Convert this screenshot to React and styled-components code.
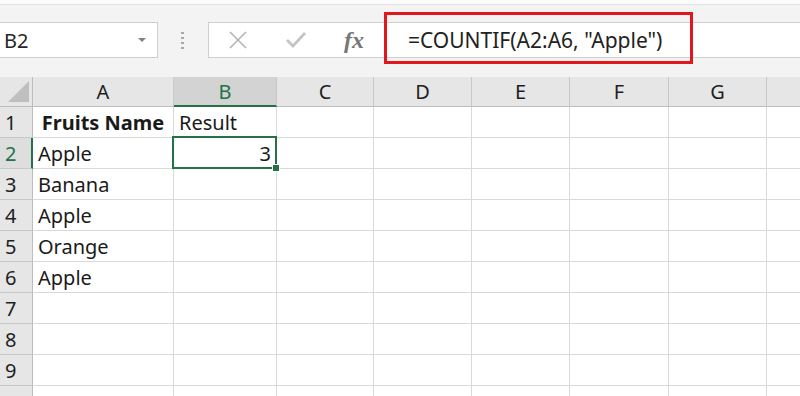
import React from 'react'
import styled, { createGlobalStyle } from 'styled-components'

const GlobalStyle = createGlobalStyle`
  body {
    margin: 0;
    background: #ffffff;
  }
`

// last column lies past the window edge, its letter is never seen
const columns = ['A', 'B', 'C', 'D', 'E', 'F', 'G', '']

const rows = [
  { a: 'Fruits Name', b: 'Result', head: true },
  { a: 'Apple', b: '3' },
  { a: 'Banana' },
  { a: 'Apple' },
  { a: 'Orange' },
  { a: 'Apple' },
  {},
  {},
  {},
  {},
]

function App() {
  return (
    <Page>
      <GlobalStyle />
      <TopStrip />
      <FormulaRow>
        <NameBox>
          <span>B2</span>
          <Caret />
        </NameBox>
        <Grip>
          <i /><i /><i /><i />
        </Grip>
        <FormulaBox>
          <IconSlot>
            <svg width="20" height="20" viewBox="0 0 20 20">
              <path d="M2 2 L18 18 M18 2 L2 18" stroke="#b4b4b4" strokeWidth="1.6" fill="none" />
            </svg>
          </IconSlot>
          <IconSlot>
            <svg width="22" height="18" viewBox="0 0 22 18">
              <path d="M2 9 L8 15 L20 2" stroke="#c4c4c4" strokeWidth="2.8" fill="none" />
            </svg>
          </IconSlot>
          <IconSlot>
            <Fx>fx</Fx>
          </IconSlot>
          <FormulaText>=COUNTIF(A2:A6, "Apple")</FormulaText>
        </FormulaBox>
        <Highlight />
      </FormulaRow>
      <Sheet>
        <Corner>
          <Triangle />
        </Corner>
        {columns.map((c, i) => (
          <ColHead key={i} $active={c === 'B'}>{c}</ColHead>
        ))}
        {rows.map((r, i) => (
          <React.Fragment key={i}>
            <RowHead $active={i === 1}>{i < 9 ? i + 1 : ''}</RowHead>
            <Cell $bold={r.head} $align={r.head ? 'center' : 'flex-start'}>{r.a}</Cell>
            <Cell $align={i === 1 ? 'flex-end' : 'flex-start'} $selected={i === 1}>{r.b}</Cell>
            <Cell />
            <Cell />
            <Cell />
            <Cell />
            <Cell />
            <Cell />
          </React.Fragment>
        ))}
      </Sheet>
    </Page>
  )
}

export default App

const Page = styled.div`
  width: 800px;
  height: 396px;
  overflow: hidden;
  background: #f3f3f3;
  display: flex;
  flex-direction: column;
  font-family: "Noto Sans", "Open Sans", sans-serif;
  color: #1f1f1f;
`

const TopStrip = styled.div`
  height: 4px;
  background: #fbfbfb;
  border-bottom: 1px solid #e2e2e2;
  flex-shrink: 0;
`

const FormulaRow = styled.div`
  position: relative;
  display: flex;
  align-items: center;
  height: 36px;
  margin: 17px 0 19px;
  flex-shrink: 0;
`

const NameBox = styled.div`
  box-sizing: border-box;
  width: 158px;
  height: 36px;
  background: #fff;
  border: 1px solid #cfcfcf;
  border-left: none;
  display: flex;
  align-items: center;
  justify-content: space-between;
  padding: 0 11px 0 4px;
  font-size: 20px;
  color: #262626;
`

const Caret = styled.span`
  width: 0;
  height: 0;
  border-left: 4px solid transparent;
  border-right: 4px solid transparent;
  border-top: 4px solid #808080;
`

const Grip = styled.div`
  display: flex;
  flex-direction: column;
  gap: 3px;
  margin: 0 24px 0 23px;
  i {
    display: block;
    width: 3px;
    height: 2px;
    background: #a8a8a8;
  }
`

const FormulaBox = styled.div`
  box-sizing: border-box;
  flex: 1;
  height: 36px;
  background: #fff;
  border: 1px solid #cfcfcf;
  border-right: none;
  display: flex;
  align-items: center;
`

const IconSlot = styled.div`
  width: 58px;
  display: flex;
  justify-content: center;
  align-items: center;
`

const Fx = styled.span`
  font-family: "Liberation Serif", serif;
  font-style: italic;
  font-weight: 700;
  font-size: 24px;
  color: #777;
  line-height: 1;
`

const FormulaText = styled.div`
  padding-left: 25px;
  font-size: 21px;
  color: #222;
  white-space: nowrap;
`

const Highlight = styled.div`
  position: absolute;
  left: 384px;
  top: -10px;
  width: 309px;
  height: 52px;
  box-sizing: border-box;
  border: 3px solid #e2161d;
  pointer-events: none;
`

const Sheet = styled.div`
  display: grid;
  grid-template-columns: 33px 141px 103px 97px 98px 98px 99px 98px 98px;
  grid-template-rows: 30px;
  grid-auto-rows: 31px;
  background: #fff;
  flex: 1;
  font-size: 20px;
`

const Corner = styled.div`
  box-sizing: border-box;
  background: #e6e6e6;
  border-right: 1px solid #bdbdbd;
  border-bottom: 1px solid #bdbdbd;
  display: flex;
  align-items: flex-end;
  justify-content: flex-end;
  padding: 0 3px 4px 0;
`

const Triangle = styled.div`
  width: 0;
  height: 0;
  border-left: 21px solid transparent;
  border-bottom: 21px solid #bfbfbf;
`

const ColHead = styled.div`
  box-sizing: border-box;
  background: ${(p) => (p.$active ? '#d3d3d3' : '#e6e6e6')};
  color: ${(p) => (p.$active ? '#217346' : '#1f1f1f')};
  border-right: 1px solid #c8c8c8;
  border-bottom: ${(p) => (p.$active ? '2px solid #217346' : '1px solid #bdbdbd')};
  display: flex;
  align-items: center;
  justify-content: center;
  padding-top: ${(p) => (p.$active ? '1px' : '0')};
`

const RowHead = styled.div`
  box-sizing: border-box;
  background: ${(p) => (p.$active ? '#dedede' : '#e6e6e6')};
  color: ${(p) => (p.$active ? '#217346' : '#1f1f1f')};
  border-right: ${(p) => (p.$active ? '2px solid #217346' : '1px solid #bdbdbd')};
  border-bottom: 1px solid #c8c8c8;
  display: flex;
  align-items: center;
  padding-left: 5px;
`

const Cell = styled.div`
  position: relative;
  box-sizing: border-box;
  border-right: 1px solid #d9d9d9;
  border-bottom: 1px solid #d9d9d9;
  display: flex;
  align-items: center;
  justify-content: ${(p) => p.$align || 'flex-start'};
  padding: 0 5px;
  font-weight: ${(p) => (p.$bold ? 700 : 400)};
  white-space: nowrap;
  color: #1a1a1a;

  ${(p) =>
    p.$selected &&
    `
    &::after {
      content: '';
      position: absolute;
      top: -2px;
      left: -2px;
      right: -1px;
      bottom: -1px;
      border: 2px solid #217346;
      z-index: 1;
    }
    &::before {
      content: '';
      position: absolute;
      right: -4px;
      bottom: -4px;
      width: 6px;
      height: 6px;
      background: #217346;
      border: 1px solid #fff;
      z-index: 2;
    }
  `}
`
